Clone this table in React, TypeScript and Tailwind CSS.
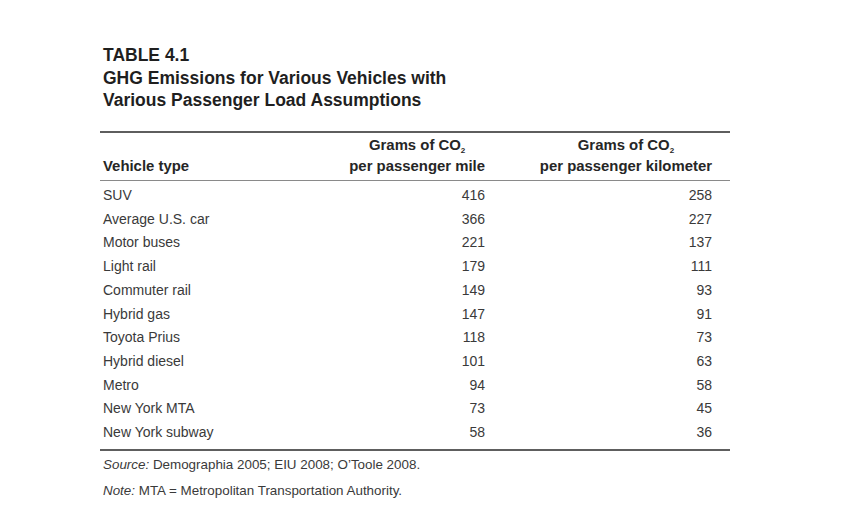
const rows: [string, string, string][] = [
  ["SUV", "416", "258"],
  ["Average U.S. car", "366", "227"],
  ["Motor buses", "221", "137"],
  ["Light rail", "179", "111"],
  ["Commuter rail", "149", "93"],
  ["Hybrid gas", "147", "91"],
  ["Toyota Prius", "118", "73"],
  ["Hybrid diesel", "101", "63"],
  ["Metro", "94", "58"],
  ["New York MTA", "73", "45"],
  ["New York subway", "58", "36"],
];

function Co2() {
  return (
    <>
      CO<span className="relative top-[3px] text-[8px]">2</span>
    </>
  );
}

export default function App() {
  return (
    <div
      className="min-h-screen bg-white pl-[100px] pt-[44px] text-[#3a3a3a]"
      style={{ fontFamily: '"Liberation Sans", Arial, sans-serif' }}
    >
      <div className="w-[630px]">
        {/* Title */}
        <div className="pl-[3px] text-[17.5px] font-bold leading-[22.5px] text-[#1f1f1f]">
          <div>TABLE 4.1</div>
          <div>GHG Emissions for Various Vehicles with</div>
          <div>Various Passenger Load Assumptions</div>
        </div>

        <div className="mt-[19.5px] h-[2px] bg-[#5e5e5e]" />

        {/* Header */}
        <div className="grid grid-cols-[246px_139px_227px_18px] items-end pt-[3px] pb-[5px] text-[14.9px] font-bold leading-[18px] text-[#262626]">
          <div className="pl-[3px]">Vehicle type</div>
          <div className="justify-self-end text-center">
            <div>
              Grams of <Co2 />
            </div>
            <div>per passenger mile</div>
          </div>
          <div className="justify-self-end text-center">
            <div>
              Grams of <Co2 />
            </div>
            <div>per passenger kilometer</div>
          </div>
          <div />
        </div>

        <div className="h-px bg-[#8a8a8a]" />

        {/* Rows */}
        <div className="mt-[3px] text-[14px] leading-[23.7px]">
          {rows.map(([name, mile, km]) => (
            <div key={name} className="grid grid-cols-[246px_139px_227px_18px]">
              <div className="pl-[3px]">{name}</div>
              <div className="text-right">{mile}</div>
              <div className="text-right">{km}</div>
              <div />
            </div>
          ))}
        </div>

        <div className="mt-[4px] h-[2px] bg-[#5e5e5e]" />

        {/* Footnotes */}
        <div className="mt-[6px] pl-[3px] text-[13.4px] leading-[16px]">
          <div>
            <i>Source:</i> Demographia 2005; EIU 2008; O’Toole 2008.
          </div>
          <div className="mt-[10px]">
            <i>Note:</i> MTA = Metropolitan Transportation Authority.
          </div>
        </div>
      </div>
    </div>
  );
}
